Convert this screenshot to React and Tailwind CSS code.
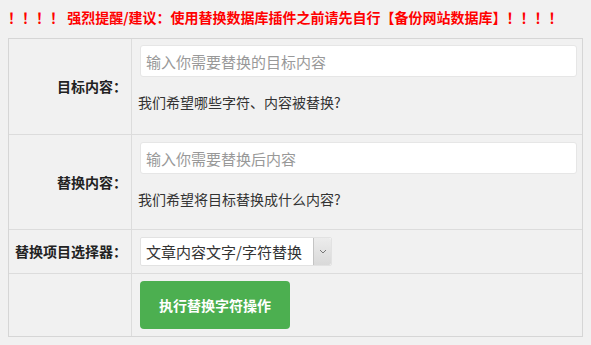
import React from 'react'

const FONT = { fontFamily: '"Noto Sans CJK SC", "Liberation Sans", sans-serif' }

function Row({ label, children, className = '' }) {
  return (
    <div className={`grid grid-cols-[123px_1fr] border-t border-[#dcdcdc] first:border-t-0 ${className}`}>
      <div className="flex items-center justify-end pr-[4px] border-r border-[#dcdcdc] text-[14px] font-bold text-[#222]">
        {label}
      </div>
      <div className="pl-[6px] pr-[5px]">{children}</div>
    </div>
  )
}

function TextField({ placeholder }) {
  return (
    <input
      type="text"
      placeholder={placeholder}
      className="block ml-[2px] w-[437px] h-[32px] px-[5px] bg-white border border-[#e6e6e6] rounded-[3px] text-[15px] text-[#333] placeholder:text-[#999] outline-none"
      style={FONT}
    />
  )
}

export default function App() {
  return (
    <div className="w-[591px] h-[345px] bg-[#f1f1f1] text-[#333] overflow-hidden" style={FONT}>
      {/* warning */}
      <div className="px-[8px] pt-[6px] h-[38px] text-[14px] leading-[22px] font-bold text-[#f00] whitespace-nowrap">
        ！！！！ 强烈提醒/建议：使用替换数据库插件之前请先自行【备份网站数据库】！！！！
      </div>

      {/* form table */}
      <div className="ml-[8px] w-[575px] border border-[#d6d6d6]">
        <Row label="目标内容：">
          <div className="py-[6px]">
            <TextField placeholder="输入你需要替换的目标内容" />
            <p className="mt-[15px] mb-[16px] text-[14px] leading-5">我们希望哪些字符、内容被替换?</p>
          </div>
        </Row>

        <Row label="替换内容：">
          <div className="py-[7px]">
            <TextField placeholder="输入你需要替换后内容" />
            <p className="mt-[15px] mb-[13px] text-[14px] leading-5">我们希望将目标替换成什么内容?</p>
          </div>
        </Row>

        <Row label="替换项目选择器：">
          <div className="pt-[7px] pb-[7px]">
            <div className="ml-[2px] flex w-[192px] h-[29px] bg-white border border-[#e2e2e2] rounded-[2px]">
              <span className="flex-1 pl-[5px] text-[15px] leading-[27px] text-[#333] whitespace-nowrap">
                文章内容文字/字符替换
              </span>
              <span className="flex items-center justify-center w-[18px] bg-gradient-to-b from-[#ececec] to-[#d9d9d9] border-l border-[#c4c4c4] rounded-r-[2px]">
                <svg width="8" height="5" viewBox="0 0 8 5">
                  <path d="M1 1l3 3 3-3" fill="none" stroke="#777" strokeWidth="1" />
                </svg>
              </span>
            </div>
          </div>
        </Row>

        <Row label="">
          <div className="py-[7px]">
            <button
              className="ml-[2px] w-[150px] h-[48px] rounded-[4px] bg-[#4caf50] text-white text-[14px] font-bold"
              style={FONT}
            >
              执行替换字符操作
            </button>
          </div>
        </Row>
      </div>
    </div>
  )
}
